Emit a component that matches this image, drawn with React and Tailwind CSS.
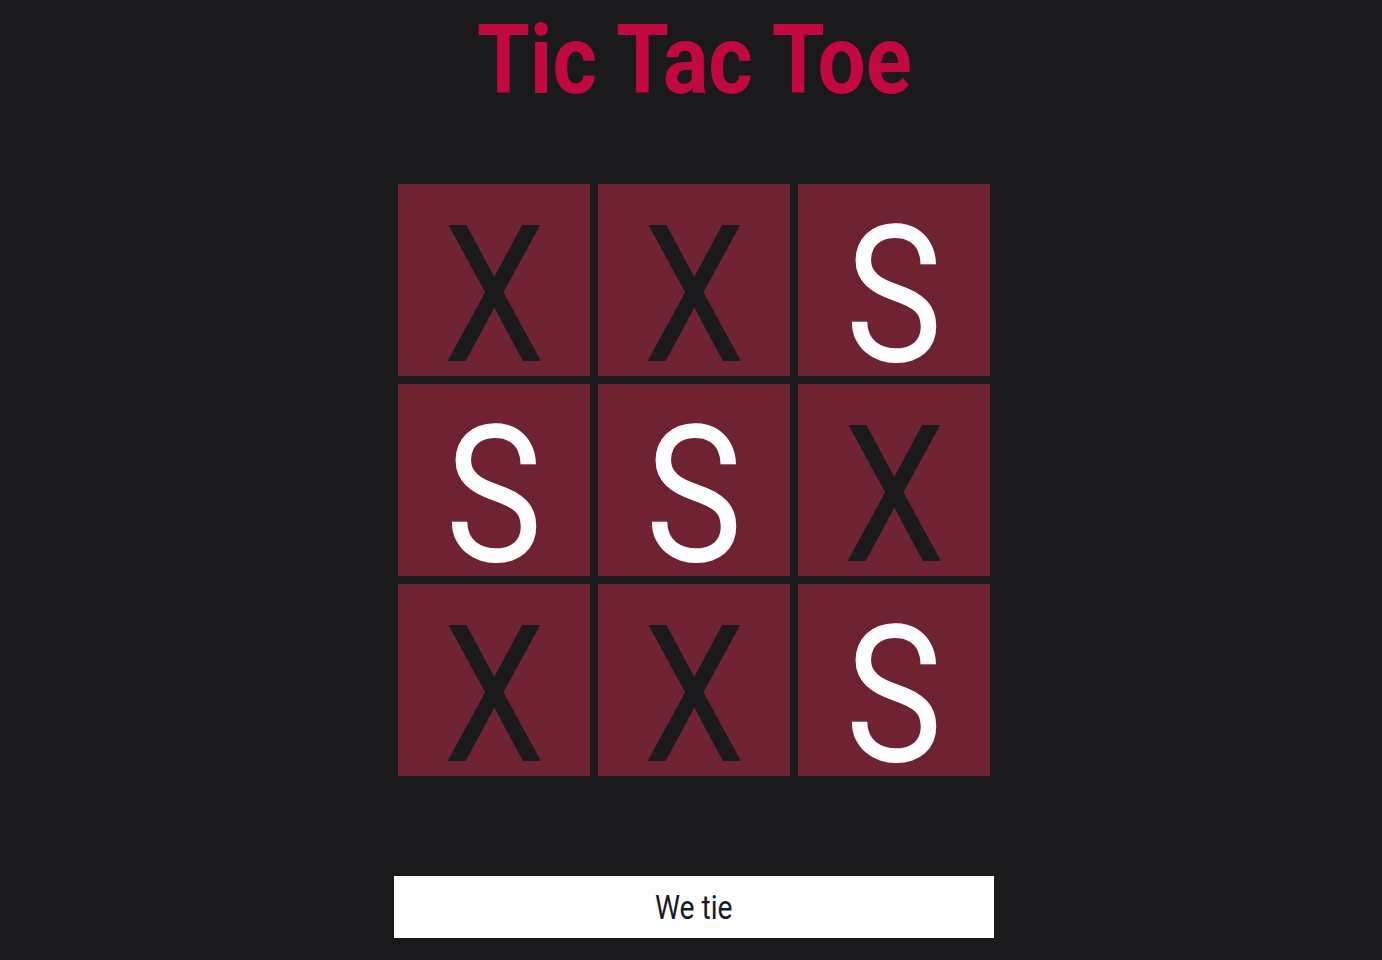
import React, { useState } from 'react';

const BOARD = ['X', 'X', 'S', 'S', 'S', 'X', 'X', 'X', 'S'];

const Cell = ({ value }) => (
    <div className="w-[192px] h-[192px] bg-[#6f2232] flex items-center justify-center">
        <span
            className={`block translate-y-[16px] scale-x-[0.85] text-[192px] leading-[140px] font-normal ${value === 'X' ? 'text-[#1a1a1d]' : 'text-white'}`}
        >
            {value}
        </span>
    </div>
);

const App = () => {
    const [board] = useState(BOARD);

    return (
        <div className="min-h-[960px] bg-[#1a1a1d] font-['Roboto',sans-serif] pl-[6px]">
            <div className="flex flex-col items-center">
                <h1 className="scale-x-[0.89] text-[96px] leading-none font-bold text-[#c3073f] mt-[12px]">
                    Tic Tac Toe
                </h1>
                <div className="grid grid-cols-[repeat(3,192px)] gap-[8px] mt-[76px]">
                    {board.map((v, i) => <Cell key={i} value={v} />)}
                </div>
                <button className="w-[600px] h-[62px] bg-white mt-[100px] text-[#1a1a1d] text-[34px]">
                    <span className="inline-block scale-x-[0.83]">We tie</span>
                </button>
            </div>
        </div>
    );
};

export default App;
